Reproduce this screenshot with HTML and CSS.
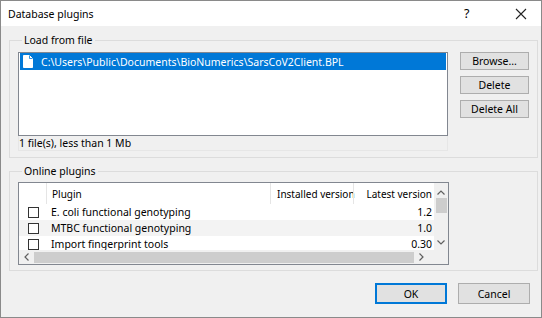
FILE: index.html
```html
<!DOCTYPE html>
<html lang="en">
<head>
  <meta charset="UTF-8" />
  <title>Database plugins</title>
  <link rel="stylesheet" href="styles.css">
</head>
<body>
  <div class="window">
    <div class="titlebar">
      <span class="title">Database plugins</span>
      <span class="help">?</span>
      <span class="close">
        <svg width="12" height="12" viewBox="0 0 12 12"><path d="M1 1 L11 11 M11 1 L1 11" stroke="#222" stroke-width="1.1" fill="none"/></svg>
      </span>
    </div>

    <div class="content">
      <fieldset class="group group-file">
        <legend>Load from file</legend>
        <div class="file-row">
          <div class="file-box">
            <div class="file-list">
              <div class="file-item selected">
                <svg class="file-icon" width="10" height="13" viewBox="0 0 10 13"><path d="M0.5 0.5 H6.5 L9.5 3.5 V12.5 H0.5 Z" fill="#fff" stroke="#fff"/><path d="M6.5 0.5 V3.5 H9.5" fill="none" stroke="#0078d7" stroke-width="0.8"/></svg>
                <span>C:\Users\Public\Documents\BioNumerics\SarsCoV2Client.BPL</span>
              </div>
            </div>
            <div class="file-status">1 file(s), less than 1 Mb</div>
          </div>
          <div class="side-buttons">
            <button class="btn">Browse...</button>
            <button class="btn">Delete</button>
            <button class="btn">Delete All</button>
          </div>
        </div>
      </fieldset>

      <fieldset class="group group-online">
        <legend>Online plugins</legend>
        <div class="plugin-table">
          <div class="table-view">
            <div class="trow thead">
              <div class="cell c-check"></div>
              <div class="cell c-name">Plugin</div>
              <div class="cell c-inst">Installed version</div>
              <div class="cell c-latest">Latest version</div>
            </div>
            <div class="trow">
              <div class="cell c-check"><span class="checkbox"></span></div>
              <div class="cell c-name">E. coli functional genotyping</div>
              <div class="cell c-inst"></div>
              <div class="cell c-latest">1.2</div>
            </div>
            <div class="trow alt">
              <div class="cell c-check"><span class="checkbox"></span></div>
              <div class="cell c-name">MTBC functional genotyping</div>
              <div class="cell c-inst"></div>
              <div class="cell c-latest">1.0</div>
            </div>
            <div class="trow">
              <div class="cell c-check"><span class="checkbox"></span></div>
              <div class="cell c-name">Import fingerprint tools</div>
              <div class="cell c-inst"></div>
              <div class="cell c-latest">0.30</div>
            </div>
          </div>
          <div class="vscroll">
            <svg width="8" height="5" viewBox="0 0 8 5"><path d="M0.5 4.5 L4 1 L7.5 4.5" stroke="#606060" stroke-width="1.2" fill="none"/></svg>
            <div class="vthumb"></div>
            <div class="vtrack"></div>
            <svg width="8" height="5" viewBox="0 0 8 5"><path d="M0.5 0.5 L4 4 L7.5 0.5" stroke="#606060" stroke-width="1.2" fill="none"/></svg>
          </div>
          <div class="hscroll">
            <svg width="5" height="8" viewBox="0 0 5 8"><path d="M4.5 0.5 L1 4 L4.5 7.5" stroke="#606060" stroke-width="1.2" fill="none"/></svg>
            <div class="hthumb"></div>
            <svg width="5" height="8" viewBox="0 0 5 8"><path d="M0.5 0.5 L4 4 L0.5 7.5" stroke="#606060" stroke-width="1.2" fill="none"/></svg>
          </div>
          <div class="corner"></div>
        </div>
      </fieldset>

      <div class="footer">
        <button class="btn btn-footer default">OK</button>
        <button class="btn btn-footer">Cancel</button>
      </div>
    </div>
  </div>
</body>
</html>
```

FILE: styles.css
```css
body {
  margin: 0;
  font-family: 'Noto Sans', sans-serif;
  font-size: 10.5px;
  color: #000;
}
.window {
  width: 542px;
  height: 318px;
  box-sizing: border-box;
  border: 1px solid #8a8a8a;
  background: #f0f0f0;
  display: flex;
  flex-direction: column;
}
.titlebar {
  height: 25px;
  background: #fff;
  display: flex;
  align-items: center;
  padding-left: 7px;
}
.title {
  font-size: 10.5px;
  flex: 1;
}
.help {
  font-size: 12.5px;
  width: 20px;
  margin-right: 31px;
}
.close {
  display: flex;
  margin-right: 14px;
}
.content {
  padding: 7px 3px 0 8px;
}
.group {
  margin: 0;
  border: 1px solid #dcdcdc;
  padding: 0 8px 0 8px;
}
.group legend {
  padding: 0 2px;
  margin-left: 4px;
  line-height: 15px;
}
.group-file {
  padding-top: 4px;
  padding-bottom: 6px;
}
.file-row {
  display: flex;
  gap: 12px;
}
.file-box {
  width: 430px;
}
.file-list {
  height: 82px;
  background: #fff;
  border: 1px solid #828790;
  padding: 0 1px;
}
.file-item {
  height: 17px;
  display: flex;
  align-items: center;
  gap: 8px;
  padding-left: 3px;
}
.file-item.selected {
  background: #0078d7;
  color: #fff;
}
.file-icon {
  display: block;
}
.file-status {
  height: 14px;
  line-height: 14px;
  border: 1px solid #e6e6e6;
  border-top: none;
  padding-left: 0;
}
.side-buttons {
  display: flex;
  flex-direction: column;
  gap: 6px;
}
.btn {
  font-family: 'Noto Sans', sans-serif;
  font-size: 10.5px;
  background: #e1e1e1;
  border: 1px solid #adadad;
  width: 69px;
  height: 18px;
  padding: 0;
  color: #000;
}
.group-online {
  margin-top: 6px;
  padding-top: 3px;
  padding-bottom: 5px;
}
.plugin-table {
  width: 429px;
  height: 81px;
  border: 1px solid #828790;
  background: #fff;
  display: grid;
  grid-template-columns: 1fr 14px;
  grid-template-rows: 1fr 14px;
}
.table-view {
  overflow: hidden;
}
.trow {
  display: flex;
  height: 16px;
  align-items: center;
}
.trow.alt {
  background: #f3f3f3;
}
.thead {
  height: 21px;
  align-items: stretch;
  font-size: 10px;
}
.thead .cell {
  display: flex;
  align-items: center;
}
.thead .c-name,
.thead .c-inst,
.thead .c-latest {
  border-left: 1px solid #e5e5e5;
}
.cell {
  box-sizing: border-box;
  white-space: nowrap;
}
.c-check {
  width: 27px;
  padding-left: 9px;
  display: flex;
}
.c-name {
  width: 224px;
  padding-left: 5px;
}
.c-inst {
  width: 83px;
  padding-left: 6px;
}
.c-latest {
  width: 80px;
  text-align: right;
  justify-content: flex-end;
  padding-right: 1px;
}
.checkbox {
  width: 9px;
  height: 9px;
  border: 1px solid #333;
  background: #fff;
}
.vscroll {
  background: #f0f0f0;
  display: flex;
  flex-direction: column;
  align-items: center;
  padding-top: 7px;
}
.vthumb {
  width: 11px;
  height: 15px;
  margin-top: 3px;
  background: #cdcdcd;
}
.vtrack {
  flex: 1;
}
.vscroll svg:last-child {
  margin-bottom: 5px;
}
.hscroll {
  background: #f0f0f0;
  display: flex;
  align-items: center;
  padding: 0 5px;
  gap: 5px;
}
.hthumb {
  width: 380px;
  height: 11px;
  background: #cdcdcd;
}
.corner {
  background: #f0f0f0;
}
.footer {
  display: flex;
  justify-content: flex-end;
  gap: 11px;
  padding: 12px 8px 0 0;
}
.btn-footer {
  width: 72px;
  height: 21px;
}
.btn-footer.default {
  border: 1px solid #0078d7;
  box-shadow: inset 0 0 0 1px #0078d7;
}
```
